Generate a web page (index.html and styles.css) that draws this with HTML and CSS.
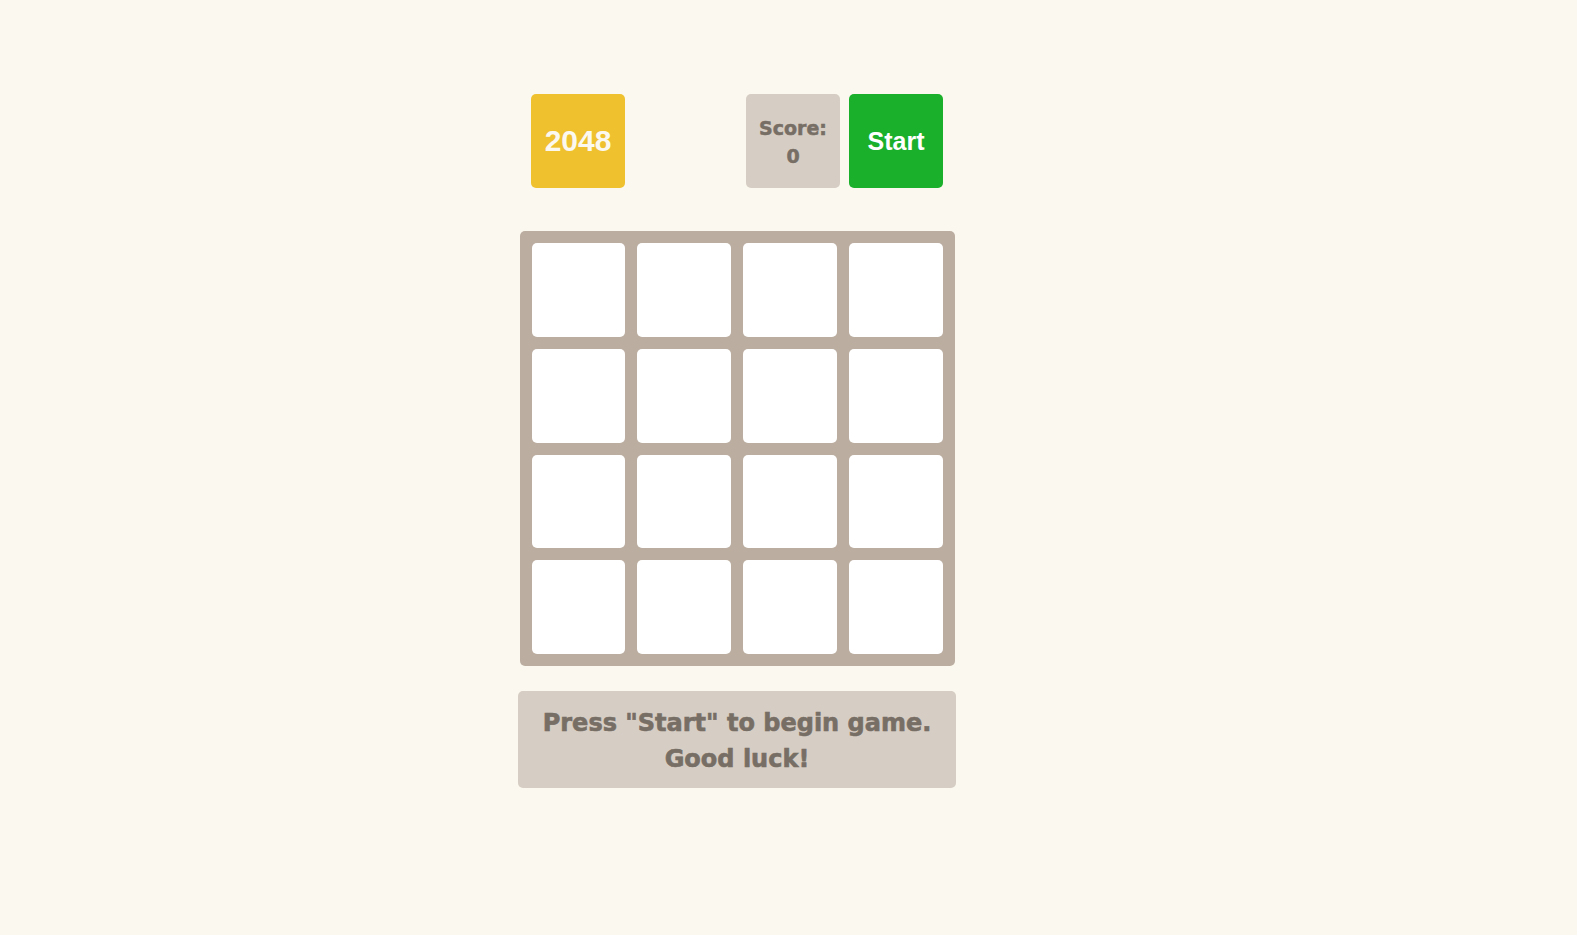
FILE: index.html
```html
<!DOCTYPE html>
<html>
<head>
<meta charset="utf-8">
<link rel="stylesheet" href="styles.css">
</head>
<body>
<div class="game">
  <div class="header">
    <div class="logo">2048</div>
    <div class="spacer"></div>
    <div class="score">Score:<br>0</div>
    <button class="start">Start</button>
  </div>
  <div class="grid">
    <div class="cell"></div><div class="cell"></div><div class="cell"></div><div class="cell"></div>
    <div class="cell"></div><div class="cell"></div><div class="cell"></div><div class="cell"></div>
    <div class="cell"></div><div class="cell"></div><div class="cell"></div><div class="cell"></div>
    <div class="cell"></div><div class="cell"></div><div class="cell"></div><div class="cell"></div>
  </div>
  <div class="message">Press "Start" to begin game.<br>Good luck!</div>
</div>
</body>
</html>
```
FILE: styles.css
```css
html, body {
  margin: 0;
  padding: 0;
  background: #fbf8ef;
  height: 100%;
}
.game {
  width: 438px;
  margin-left: 518px;
  padding-top: 94px;
  display: flex;
  flex-direction: column;
  align-items: center;
}
.header {
  width: 412px;
  display: flex;
  align-items: stretch;
  gap: 10px;
}
.spacer { flex: 1; }
.logo, .score, .start {
  width: 94px;
  height: 94px;
  border-radius: 5px;
  box-sizing: border-box;
  display: flex;
  align-items: center;
  justify-content: center;
  text-align: center;
}
.logo {
  background: #efc12f;
  color: #fbf8ef;
  font-family: "Liberation Sans", Arial, sans-serif;
  font-weight: bold;
  font-size: 30px;
}
.score {
  background: #d6cdc4;
  color: #776e65;
  font-family: "DejaVu Sans", sans-serif;
  font-weight: bold;
  font-size: 19px;
  line-height: 28px;
  -webkit-text-stroke: 0.5px #776e65;
  padding-top: 1px;
  margin-right: -1px;
}
.start {
  border: none;
  background: #1bb02b;
  color: #ffffff;
  font-family: "Liberation Sans", Arial, sans-serif;
  font-weight: bold;
  font-size: 25px;
  padding: 0;
}
.grid {
  margin-top: 43px;
  width: 435px;
  height: 435px;
  box-sizing: border-box;
  padding: 12px;
  background: #bbada0;
  border-radius: 5px;
  display: grid;
  grid-template-columns: repeat(4, 1fr);
  grid-template-rows: repeat(4, 1fr);
  gap: 12px;
}
.cell {
  background: #ffffff;
  border-radius: 5px;
}
.message {
  margin-top: 25px;
  width: 438px;
  height: 97px;
  box-sizing: border-box;
  padding-top: 2px;
  background: #d6cdc4;
  border-radius: 5px;
  color: #776e65;
  font-family: "DejaVu Sans", sans-serif;
  font-weight: bold;
  font-size: 24px;
  line-height: 36px;
  -webkit-text-stroke: 0.6px #776e65;
  display: flex;
  align-items: center;
  justify-content: center;
  text-align: center;
}
```
